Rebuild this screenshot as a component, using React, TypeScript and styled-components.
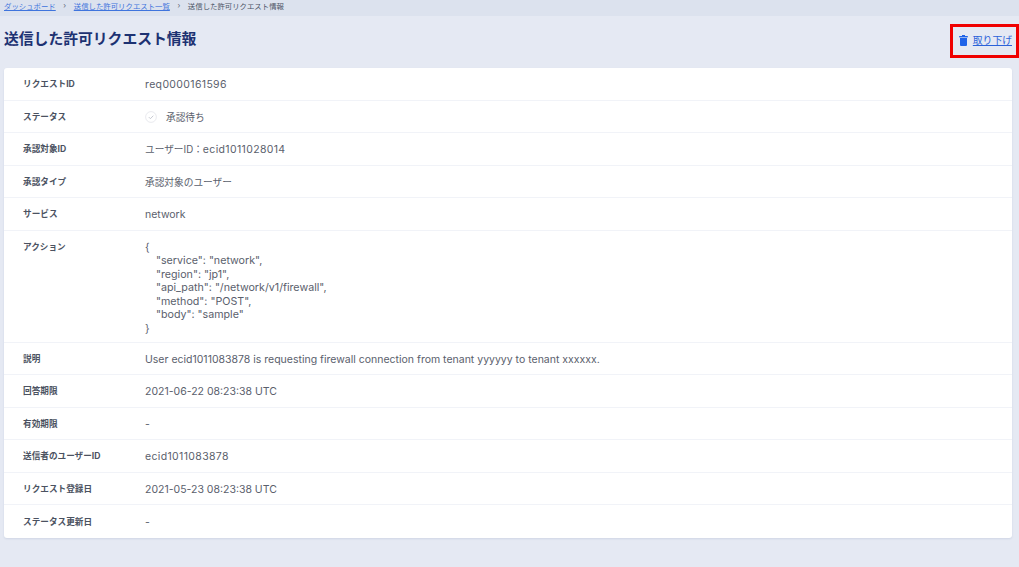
import styled, { createGlobalStyle } from "styled-components";
import type { ReactNode } from "react";

const GlobalStyle = createGlobalStyle`
  html, body {
    margin: 0;
    padding: 0;
    background: #e5e9f3;
    font-family: Inter, "Noto Sans CJK JP", sans-serif;
  }
`;

const Page = styled.div`
  position: relative;
  width: 1019px;
  height: 567px;
  overflow: hidden;
  background: #e5e9f3;
`;

const Breadcrumb = styled.nav`
  display: flex;
  align-items: center;
  height: 16px;
  padding: 0 4px 5px;
  box-sizing: border-box;
  background: #dce2ee;
  font-size: 7.4px;
  color: #4c5566;
`;

const Crumb = styled.a`
  color: #3f74dd;
  text-decoration: underline;
`;

const Sep = styled.span`
  width: 18px;
  text-align: center;
  color: #5f6878;
`;

const Header = styled.header`
  display: flex;
  align-items: center;
  justify-content: space-between;
  height: 52px;
  padding: 0 7px 6px 4px;
  box-sizing: border-box;
`;

const Title = styled.h1`
  margin: 0 0 3px;
  font-size: 14.8px;
  font-weight: 700;
  color: #1d3272;
`;

const Withdraw = styled.a`
  display: flex;
  align-items: center;
  gap: 5px;
  margin-top: 2px;
  font-size: 9.8px;
  color: #2b62d9;
  span {
    text-decoration: underline;
  }
`;

const Highlight = styled.div`
  position: absolute;
  left: 950px;
  top: 24px;
  width: 69px;
  height: 34px;
  box-sizing: border-box;
  border: 3px solid #f00000;
`;

const Card = styled.section`
  margin: 0 7px 0 4px;
  background: #ffffff;
  border-radius: 3px;
  box-shadow: 0 1px 2px rgba(60, 80, 130, 0.12);
`;

const Row = styled.div<{ $tall?: boolean }>`
  display: grid;
  grid-template-columns: 122px 1fr;
  height: ${(p) => (p.$tall ? "112px" : "32.5px")};
  padding-left: 19px;
  box-sizing: border-box;
  align-items: ${(p) => (p.$tall ? "start" : "center")};
  padding-top: ${(p) => (p.$tall ? "9px" : "0")};
  border-bottom: 1px solid #f1f3f8;
  &:last-child {
    border-bottom: none;
  }
`;

const Label = styled.div`
  padding-bottom: 1px;
  font-size: 8.65px;
  font-weight: 700;
  color: #4b5261;
`;

const Value = styled.div<{ $wide?: boolean }>`
  padding-top: 2px;
  font-size: 10.5px;
  color: #5a606c;
  line-height: 13.5px;
  letter-spacing: ${(p) => (p.$wide ? "0.35px" : "0")};
`;

const Ja = styled.span`
  font-size: 9.7px;
  letter-spacing: 0;
`;

const StatusValue = styled.div`
  display: flex;
  align-items: center;
  gap: 9px;
`;

const JsonBlock = styled.div`
  margin-top: -1px;
  font-size: 10.7px;
`;

const JsonLine = styled.div<{ $indent?: boolean }>`
  padding-left: ${(p) => (p.$indent ? "11px" : "0")};
`;

const jsonLines = [
  '"service": "network",',
  '"region": "jp1",',
  '"api_path": "/network/v1/firewall",',
  '"method": "POST",',
  '"body": "sample"',
];

const TrashIcon = () => (
  <svg width="9" height="11" viewBox="0 0 9 11">
    <rect x="3" y="0" width="3" height="1.4" fill="#1f63e8" />
    <rect x="0.2" y="1" width="8.6" height="1.4" fill="#1f63e8" />
    <path d="M1 3h7v7a1 1 0 0 1-1 1H2a1 1 0 0 1-1-1z" fill="#1f63e8" />
  </svg>
);

const CheckIcon = () => (
  <svg width="12" height="12" viewBox="0 0 12 12" fill="none">
    <circle cx="6" cy="6" r="5.4" stroke="#e3e5ea" strokeWidth="0.8" />
    <path d="M3.8 6.1l1.6 1.6 2.9-3" stroke="#b9bdc6" strokeWidth="0.8" />
  </svg>
);

const rows: { label: string; value: ReactNode; wide?: boolean }[] = [
  { label: "リクエストID", value: "req0000161596", wide: true },
  {
    label: "ステータス",
    value: (
      <StatusValue>
        <CheckIcon />
        <Ja>承認待ち</Ja>
      </StatusValue>
    ),
  },
  {
    label: "承認対象ID",
    value: (
      <>
        <Ja>ユーザーID：</Ja>ecid1011028014
      </>
    ),
    wide: true,
  },
  { label: "承認タイプ", value: <Ja>承認対象のユーザー</Ja> },
  { label: "サービス", value: "network" },
  {
    label: "アクション",
    value: (
      <JsonBlock>
        <JsonLine>{"{"}</JsonLine>
        {jsonLines.map((l) => (
          <JsonLine $indent key={l}>
            {l}
          </JsonLine>
        ))}
        <JsonLine>{"}"}</JsonLine>
      </JsonBlock>
    ),
  },
  {
    label: "説明",
    value: "User ecid1011083878 is requesting firewall connection from tenant yyyyyy to tenant xxxxxx.",
  },
  { label: "回答期限", value: "2021-06-22 08:23:38 UTC" },
  { label: "有効期限", value: "-" },
  { label: "送信者のユーザーID", value: "ecid1011083878", wide: true },
  { label: "リクエスト登録日", value: "2021-05-23 08:23:38 UTC" },
  { label: "ステータス更新日", value: "-" },
];

const App = () => {
  return (
    <Page>
      <GlobalStyle />
      <Breadcrumb>
        <Crumb>ダッシュボード</Crumb>
        <Sep>›</Sep>
        <Crumb>送信した許可リクエスト一覧</Crumb>
        <Sep>›</Sep>
        <span>送信した許可リクエスト情報</span>
      </Breadcrumb>
      <Header>
        <Title>送信した許可リクエスト情報</Title>
        <Withdraw>
          <TrashIcon />
          <span>取り下げ</span>
        </Withdraw>
      </Header>
      <Highlight />
      <Card>
        {rows.map((r) => (
          <Row key={r.label} $tall={r.label === "アクション"}>
            <Label>{r.label}</Label>
            <Value $wide={r.wide}>{r.value}</Value>
          </Row>
        ))}
      </Card>
    </Page>
  );
};

export default App;
